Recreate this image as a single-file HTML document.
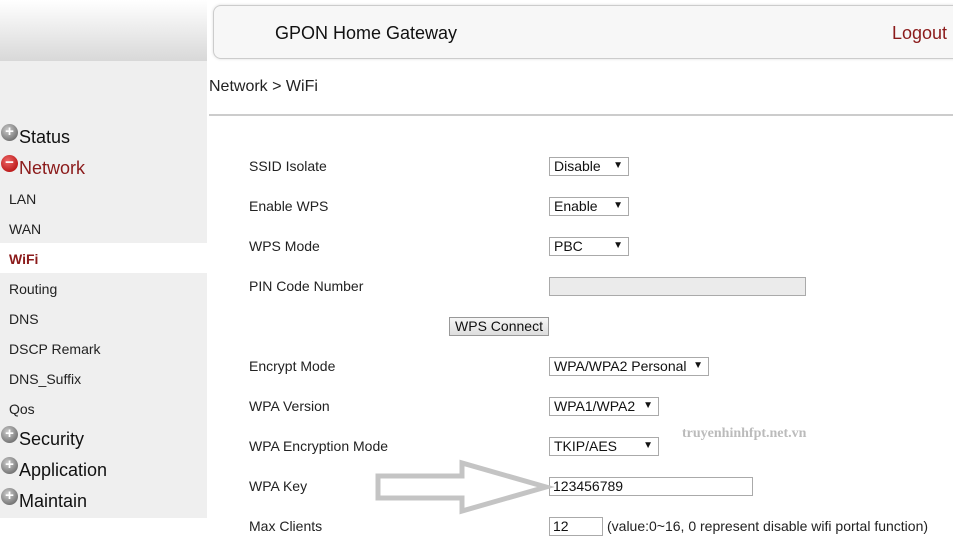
<!DOCTYPE html>
<html><head><style>
body{margin:0;width:953px;height:540px;overflow:hidden;background:#fff;font-family:"Liberation Sans",Arial,sans-serif;position:relative}
.a{position:absolute}
.side{left:0;top:0;width:207px;height:518px;background:#efefef}
.topg{left:0;top:0;width:207px;height:61px;background:linear-gradient(#fff,#d8d8d8)}
.hdr{left:213px;top:5px;width:760px;height:52px;border:1px solid #ccc;border-radius:8px;background:#f7f7f7;box-shadow:0 0 3px #ddd}
.m{font-size:18px;color:#111}
.s{font-size:14px;color:#222;left:9px}
.ic{display:inline-block;width:17px;height:17px;border-radius:50%;background:radial-gradient(circle at 40% 35%,#ccc,#555);color:#fff;font-size:15px;line-height:16px;text-align:center;font-weight:bold;vertical-align:top;margin-top:-3px;margin-right:1px}
.lbl{left:249px;font-size:14px;color:#222}
.sel{height:19px;border:1px solid #aaa;background:#fff;font-size:14px;line-height:16px;padding-left:4px;box-sizing:border-box;color:#111}
.sel:after{content:"▼";position:absolute;right:5px;font-size:10px}
.inp{border:1px solid #aaa;background:#fff;height:19px;box-sizing:border-box;font-size:14px;line-height:16px;padding-left:3px;color:#111}
</style></head><body>
<div class="a side"></div>
<div class="a topg"></div>
<div class="a" style="left:0;top:243px;width:207px;height:30px;background:#fff"></div>
<div class="a hdr"></div>
<div class="a" style="left:275px;top:23px;font-size:18px;color:#111">GPON Home Gateway</div>
<div class="a" style="left:892px;top:23px;font-size:18px;color:#8b1a1a">Logout</div>
<div class="a" style="left:209px;top:78px;font-size:16px;color:#222">Network &gt; WiFi</div>
<div class="a" style="left:209px;top:114px;width:744px;height:2px;background:#ccc"></div>

<div class="a m" style="left:1px;top:127px"><span class="ic">+</span>Status</div>
<div class="a m" style="left:1px;top:158px;color:#8b1a1a"><span class="ic" style="background:radial-gradient(circle at 40% 35%,#e66,#a00)">−</span>Network</div>
<div class="a s" style="top:191px">LAN</div>
<div class="a s" style="top:221px">WAN</div>
<div class="a s" style="top:251px;color:#8b1a1a;font-weight:bold">WiFi</div>
<div class="a s" style="top:281px">Routing</div>
<div class="a s" style="top:311px">DNS</div>
<div class="a s" style="top:341px">DSCP Remark</div>
<div class="a s" style="top:371px">DNS_Suffix</div>
<div class="a s" style="top:401px">Qos</div>
<div class="a m" style="left:1px;top:429px"><span class="ic">+</span>Security</div>
<div class="a m" style="left:1px;top:460px"><span class="ic">+</span>Application</div>
<div class="a m" style="left:1px;top:491px"><span class="ic">+</span>Maintain</div>

<div class="a lbl" style="top:158px">SSID Isolate</div>
<div class="a lbl" style="top:198px">Enable WPS</div>
<div class="a lbl" style="top:238px">WPS Mode</div>
<div class="a lbl" style="top:278px">PIN Code Number</div>
<div class="a lbl" style="top:358px">Encrypt Mode</div>
<div class="a lbl" style="top:398px">WPA Version</div>
<div class="a lbl" style="top:438px">WPA Encryption Mode</div>
<div class="a lbl" style="top:478px">WPA Key</div>
<div class="a lbl" style="top:518px">Max Clients</div>

<div class="a sel" style="left:549px;top:157px;width:80px">Disable</div>
<div class="a sel" style="left:549px;top:197px;width:80px">Enable</div>
<div class="a sel" style="left:549px;top:237px;width:80px">PBC</div>
<div class="a inp" style="left:549px;top:277px;width:257px;background:#ebebeb"></div>
<div class="a" style="left:449px;top:317px;width:100px;height:19px;border:1px solid #999;background:linear-gradient(#f6f6f6,#ddd);font-size:14px;line-height:17px;text-align:center;box-sizing:border-box;color:#111">WPS Connect</div>
<div class="a sel" style="left:549px;top:357px;width:160px">WPA/WPA2 Personal</div>
<div class="a sel" style="left:549px;top:397px;width:110px">WPA1/WPA2</div>
<div class="a sel" style="left:549px;top:437px;width:110px">TKIP/AES</div>
<div class="a inp" style="left:549px;top:477px;width:204px">123456789</div>
<div class="a inp" style="left:549px;top:517px;width:54px">12</div>
<div class="a" style="left:607px;top:518px;font-size:14px;color:#222">(value:0~16, 0 represent disable wifi portal function)</div>
<div class="a" style="left:682px;top:426px;font-size:14px;color:#bbb;font-family:'Liberation Serif',serif;font-weight:bold">truyenhinhfpt.net.vn</div>
<svg class="a" style="left:370px;top:458px" width="185" height="60"><polygon points="8,18 92,18 92,5 176,29 92,53 92,40 8,40" fill="none" stroke="#c4c4c4" stroke-width="5" stroke-linejoin="miter"/></svg>
</body></html>
